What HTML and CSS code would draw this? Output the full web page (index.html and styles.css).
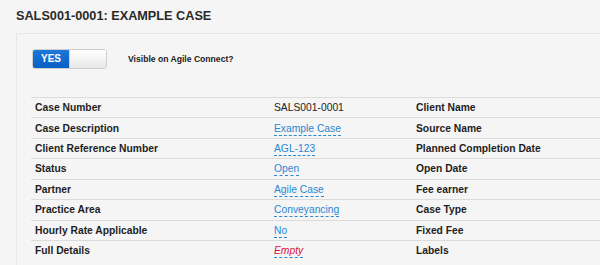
FILE: index.html
```html
<!DOCTYPE html>
<html>
<head>
<meta charset="utf-8">
<link rel="stylesheet" href="styles.css">
</head>
<body>
<h1 class="title">SALS001-0001: EXAMPLE CASE</h1>
<div class="panel">
  <div class="toggle-row">
    <div class="toggle"><span class="toggle-on">YES</span><span class="toggle-off"></span></div>
    <span class="toggle-label">Visible on Agile Connect?</span>
  </div>
  <div class="details">
    <div class="row"><div class="lbl">Case Number</div><div class="val">SALS001-0001</div><div class="lbl2">Client Name</div></div>
    <div class="row"><div class="lbl">Case Description</div><div class="val"><span class="edit">Example Case</span></div><div class="lbl2">Source Name</div></div>
    <div class="row"><div class="lbl">Client Reference Number</div><div class="val"><span class="edit">AGL-123</span></div><div class="lbl2">Planned Completion Date</div></div>
    <div class="row"><div class="lbl">Status</div><div class="val"><span class="edit">Open</span></div><div class="lbl2">Open Date</div></div>
    <div class="row"><div class="lbl">Partner</div><div class="val"><span class="edit">Agile Case</span></div><div class="lbl2">Fee earner</div></div>
    <div class="row"><div class="lbl">Practice Area</div><div class="val"><span class="edit">Conveyancing</span></div><div class="lbl2">Case Type</div></div>
    <div class="row"><div class="lbl">Hourly Rate Applicable</div><div class="val"><span class="edit">No</span></div><div class="lbl2">Fixed Fee</div></div>
    <div class="row"><div class="lbl">Full Details</div><div class="val"><span class="edit empty">Empty</span></div><div class="lbl2">Labels</div></div>
  </div>
</div>
</body>
</html>
```
FILE: styles.css
```css
html, body {
  margin: 0;
  padding: 0;
  background: #f5f5f5;
  overflow: hidden;
  width: 600px;
  height: 265px;
}
body {
  font-family: "Liberation Sans", Arial, sans-serif;
  color: #222;
}
.title {
  margin: 0;
  padding: 9px 0 0 16px;
  font-size: 12.7px;
  line-height: 15px;
  font-weight: bold;
  color: #2a2a2a;
  height: 16px;
}
.panel {
  margin: 8px 0 0 16px;
  width: 584px;
  height: 232px;
  border: 1px solid #e6e6e6;
  border-right: none;
  border-bottom: none;
  background: #f5f5f5;
  box-sizing: border-box;
  overflow: hidden;
}
.toggle-row {
  display: flex;
  align-items: center;
  padding: 15px 0 0 15px;
  height: 20px;
}
.toggle {
  display: flex;
  width: 75px;
  height: 20px;
  border: 1px solid #cfcfcf;
  border-radius: 3px;
  box-sizing: border-box;
  overflow: hidden;
}
.toggle-on {
  width: 36px;
  background: linear-gradient(#1c78d9, #0a5ec4);
  color: #fff;
  font-weight: bold;
  font-size: 10px;
  line-height: 18px;
  text-align: center;
}
.toggle-off {
  flex: 1;
  background: linear-gradient(#ffffff, #e7e7e7);
  border-left: 1px solid #d5d5d5;
}
.toggle-label {
  margin-left: 21px;
  font-size: 8.6px;
  font-weight: bold;
  color: #222;
}
.details {
  margin: 28px 0 0 14px;
}
.row {
  display: grid;
  grid-template-columns: 239px 142px 1fr;
  height: 20.43px;
  box-sizing: border-box;
  border-top: 1.5px solid #dcdcdc;
  font-size: 10.3px;
  align-items: center;
}
.lbl, .lbl2 {
  font-weight: bold;
  color: #1e1e1e;
  padding-left: 4px;
  white-space: nowrap;
}
.val {
  padding-left: 4px;
  color: #222;
}
.edit {
  color: #2a88d4;
  border-bottom: 1px dashed #2a88d4;
  padding-bottom: 1px;
}
.empty {
  color: #dd1144;
  font-style: italic;
}
```
